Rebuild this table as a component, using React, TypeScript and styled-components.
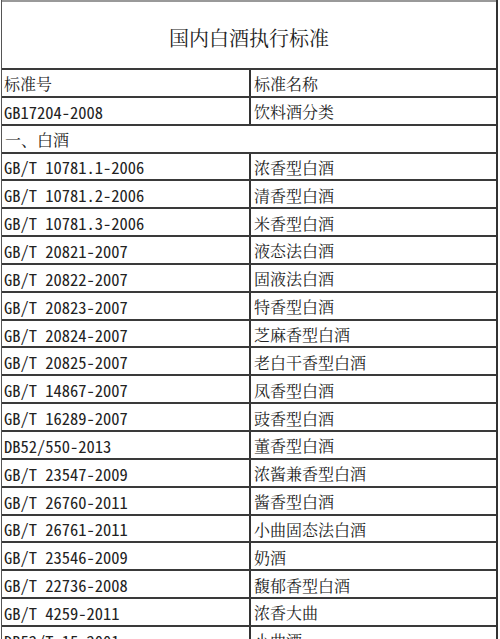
import React from "react";
import styled, { createGlobalStyle } from "styled-components";

const Global = createGlobalStyle`
  html, body { margin: 0; padding: 0; background: #fff; }
  body { overflow: hidden; }
`;

const Sheet = styled.div`
  width: 497px;
  margin-left: 1px;
  box-sizing: border-box;
  border-left: 1px solid #555;
  border-right: 2px solid #333;
  color: #222;
`;

const Title = styled.div`
  height: 68px;
  box-sizing: border-box;
  border-top: 2px solid #999;
  display: flex;
  align-items: center;
  justify-content: center;
  padding-top: 4px;
  font-family: "Noto Serif CJK SC", "Noto Sans CJK SC", serif;
  font-size: 20px;
`;

const Row = styled.div<{ $merged?: boolean }>`
  display: grid;
  grid-template-columns: ${(p) => (p.$merged ? "1fr" : "249px 1fr")};
  height: 27.85px;
  box-sizing: border-box;
  border-top: 2px solid #3a3a3a;
`;

const Code = styled.div`
  display: flex;
  align-items: center;
  padding: 2px 0 0 2px;
  border-right: 2px solid #333;
  font-family: "Noto Sans Mono CJK SC", "Liberation Mono", monospace;
  font-size: 16.5px;
  white-space: nowrap;
  overflow: hidden;
`;

const Name = styled.div<{ $first?: boolean }>`
  display: flex;
  align-items: center;
  padding: 2px 0 0 ${(p) => (p.$first ? "2px" : "3px")};
  border-right: ${(p) => (p.$first ? "2px solid #333" : "none")};
  font-family: "Noto Serif CJK SC", "Noto Sans CJK SC", serif;
  font-size: 16px;
  white-space: nowrap;
`;

const rows: [string, string][] = [
  ["GB/T 10781.1-2006", "浓香型白酒"],
  ["GB/T 10781.2-2006", "清香型白酒"],
  ["GB/T 10781.3-2006", "米香型白酒"],
  ["GB/T 20821-2007", "液态法白酒"],
  ["GB/T 20822-2007", "固液法白酒"],
  ["GB/T 20823-2007", "特香型白酒"],
  ["GB/T 20824-2007", "芝麻香型白酒"],
  ["GB/T 20825-2007", "老白干香型白酒"],
  ["GB/T 14867-2007", "凤香型白酒"],
  ["GB/T 16289-2007", "豉香型白酒"],
  ["DB52/550-2013", "董香型白酒"],
  ["GB/T 23547-2009", "浓酱兼香型白酒"],
  ["GB/T 26760-2011", "酱香型白酒"],
  ["GB/T 26761-2011", "小曲固态法白酒"],
  ["GB/T 23546-2009", "奶酒"],
  ["GB/T 22736-2008", "馥郁香型白酒"],
  ["GB/T 4259-2011", "浓香大曲"],
  ["DB52/T 15-2001", "小曲酒"],
];

export default function App() {
  return (
    <>
      <Global />
      <Sheet>
        <Title>国内白酒执行标准</Title>
        <Row>
          <Name $first>标准号</Name>
          <Name>标准名称</Name>
        </Row>
        <Row>
          <Code>GB17204-2008</Code>
          <Name>饮料酒分类</Name>
        </Row>
        <Row $merged>
          <Name>一、白酒</Name>
        </Row>
        {rows.map(([c, n]) => (
          <Row key={c}>
            <Code>{c}</Code>
            <Name>{n}</Name>
          </Row>
        ))}
      </Sheet>
    </>
  );
}
